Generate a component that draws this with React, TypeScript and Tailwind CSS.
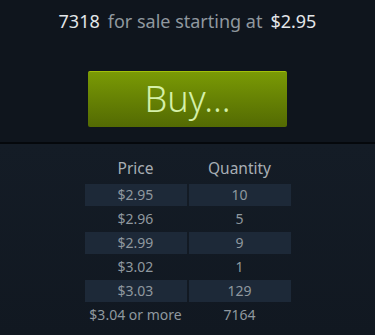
const rows = [
  { price: '$2.95', qty: '10' },
  { price: '$2.96', qty: '5' },
  { price: '$2.99', qty: '9' },
  { price: '$3.02', qty: '1' },
  { price: '$3.03', qty: '129' },
  { price: '$3.04 or more', qty: '7164' },
];

export default function App() {
  return (
    <div className="w-[375px] h-[335px] overflow-hidden bg-[#0f151d] font-['Noto_Sans',sans-serif]">
      <div className="h-[142px] flex flex-col items-center">
        <div className="mt-[8px] h-[26px] flex items-center text-[18px] leading-none">
          <span className="text-[#e3e6e9]">7318</span>
          <span className="ml-[8px] text-[#8f989f]">for sale starting at</span>
          <span className="ml-[8px] text-[#e3e6e9]">$2.95</span>
        </div>
        <button className="mt-[37px] w-[199px] h-[56px] rounded-[2px] border-t border-[#a2bf0a] bg-gradient-to-b from-[#7a9a05] to-[#536a03] flex items-center justify-center text-[36px] font-light text-[#d5f0a8] leading-none pb-[2px]">
          Buy...
        </button>
      </div>
      <div className="h-[2px] bg-[#05080c]" />
      <div className="h-[191px] bg-gradient-to-b from-[#141c26] to-[#111821] flex flex-col items-center">
        <table className="mt-[12px] border-separate border-spacing-x-[2px] border-spacing-y-[2px] text-[14px] text-[#8f989f] leading-none">
          <thead>
            <tr>
              <th className="w-[102px] h-[24px] pb-[2px] text-[15.5px] font-normal text-[#a7aeb4]">Price</th>
              <th className="w-[102px] h-[24px] pb-[2px] text-[15.5px] font-normal text-[#a7aeb4]">Quantity</th>
            </tr>
          </thead>
          <tbody>
            {rows.map((r, i) => (
              <tr key={i}>
                <td className={`h-[22px] text-center ${i % 2 === 0 ? 'bg-[#1d2938]' : ''}`}>{r.price}</td>
                <td className={`h-[22px] text-center ${i % 2 === 0 ? 'bg-[#1d2938]' : ''}`}>{r.qty}</td>
              </tr>
            ))}
          </tbody>
        </table>
      </div>
    </div>
  );
}
